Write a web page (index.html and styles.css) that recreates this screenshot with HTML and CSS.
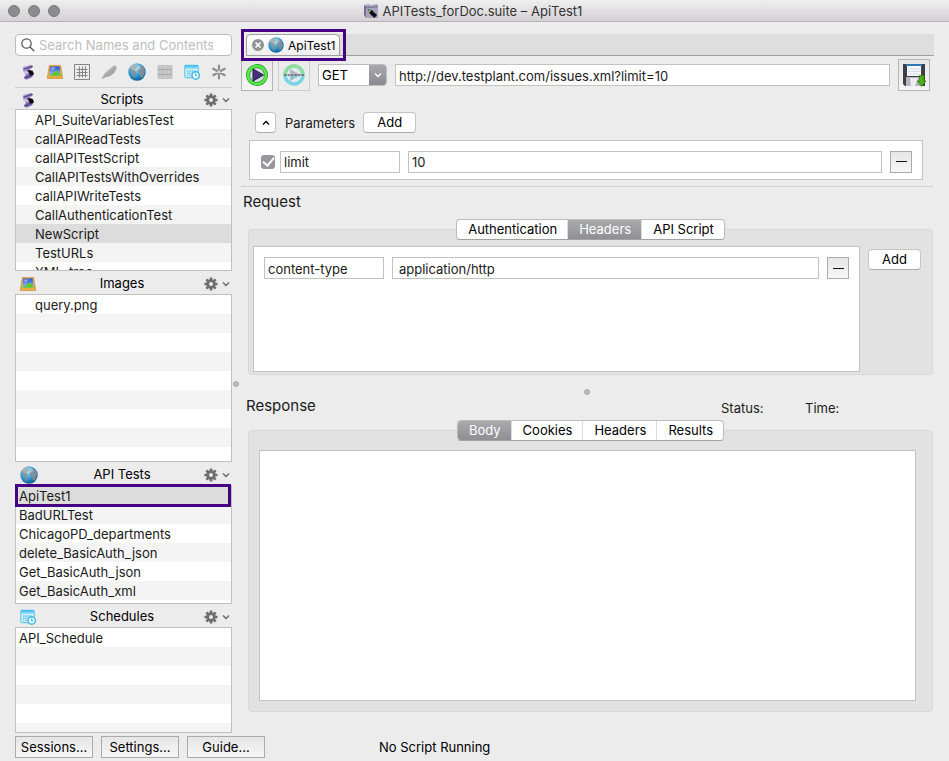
FILE: index.html
```html
<!DOCTYPE html>
<html lang="en">
<head>
<meta charset="utf-8">
<title>APITests_forDoc.suite – ApiTest1</title>
<link rel="stylesheet" href="styles.css">
</head>
<body>
<svg class="defs" aria-hidden="true">
  <defs>
    <linearGradient id="purple" x1="0" y1="0" x2="1" y2="1"><stop offset="0" stop-color="#c3b2e2"/><stop offset="1" stop-color="#5b4694"/></linearGradient>
    <radialGradient id="ocean" cx=".4" cy=".3" r=".75"><stop offset="0" stop-color="#a5e4fa"/><stop offset=".55" stop-color="#2f9bd3"/><stop offset="1" stop-color="#0c5687"/></radialGradient>
    <linearGradient id="sky" x1="0" y1="0" x2="0" y2="1"><stop offset="0" stop-color="#2350d8"/><stop offset="1" stop-color="#9ed4f6"/></linearGradient>
    <linearGradient id="blue" x1="0" y1="0" x2="0" y2="1"><stop offset="0" stop-color="#35b9ea"/><stop offset="1" stop-color="#b4e8f8"/></linearGradient>
    <linearGradient id="feather" x1="0" y1="0" x2="1" y2="1"><stop offset="0" stop-color="#cfcfcf"/><stop offset="1" stop-color="#8c8c8c"/></linearGradient>
    <symbol id="script" viewBox="0 0 16 16">
      <path d="M3 4C3 2.500 4.500 2.300 6 2.300L11 1C13 1 13.300 3 12 4L9.500 5.300l2.800 3.500c1.500 1.800.8 3.700-1 4.700L7.500 15.200c-2 .8-4-.6-3.300-2.500L6 10.700 3.800 8.500C2.700 7 3 5.500 3 4z" fill="url(#purple)"/>
      <path d="M3.500 5.200l9-2.900M4.800 14l6-3" stroke="#4d3a7c" stroke-width="1.100" fill="none"/>
      <path d="M7.500 6l5 .8 1.700 3.400-3.700 1.600z" fill="#050505"/><path d="M3 7.200l4.500.2 1.300 2-3.600.4z" fill="#d3c6ee"/>
    </symbol>
    <symbol id="image" viewBox="0 0 16 16">
      <path d="M2.300 1.500h11.400L15.800 14.500H.2z" fill="#eaaa40" stroke="#c4862a" stroke-width=".6"/>
      <path d="M3.300 2.500h9.400l1 9.300H2.300z" fill="url(#sky)"/><path d="M2.500 11.800c1.300-2 2.600-2.600 4-2 .6-2.300 2.200-3.600 3.800-2.800 1.700 1 2.800 2.800 3.400 4.800z" fill="#61c52a"/><path d="M4 3.500h5L5 6.500z" fill="#d5dcf3" opacity=".6"/>
    </symbol>
    <symbol id="table" viewBox="0 0 16 16"><path d="M.5.500h15v15H.5zM5.500 2.500v11M8.500 2.500v11M11.500 2.500v11M2.500 5.500h11M2.500 8.500h11M2.500 11.500h11" fill="none" stroke="#858585"/></symbol>
    <symbol id="quill" viewBox="0 0 16 16"><path d="M.5 14L3 11C4.500 7.500 9 5.500 11.500 2.500c1.500-1.700 4.300-1.500 4 1C15 8.500 10 12.800 4.500 13.200L1.500 15z" fill="url(#feather)"/><path d="M3 12.500L13.500 4.500" stroke="#9b9b9b" stroke-width=".6"/></symbol>
    <symbol id="globe" viewBox="0 0 18 18">
      <circle cx="9" cy="9" r="8.700" fill="url(#ocean)"/>
      <path d="M2.500 4C4 2 6.500 1.300 8.300 1.600L9.500 4 7.800 6.300 6.400 7.500l1.800 2-1 4.300-1.400 1.600-1.300-4.500-1.800-2.500L1.200 7zM11 5.300l1.800-2.800 2.700 1.800 1.400 3.200-.7 3.700-1.900 3.500-1.600-.5-.7-3.500-2-1.200-.4-2.500z" fill="#8c8f90" opacity=".85"/>
      <ellipse cx="7.500" cy="4.300" rx="5.500" ry="3" fill="#fff" opacity=".25"/>
    </symbol>
    <symbol id="server" viewBox="0 0 16 16"><rect x=".5" y="1" width="15" height="14" rx="1" fill="#c4c4c4"/><path d="M1 5.500h14M1 10.500h14" stroke="#a2a2a2"/><path d="M4 1v14M8 1v14M12 1v14" stroke="#cfcfcf" stroke-width=".6"/></symbol>
    <symbol id="calendar" viewBox="0 0 16 16"><rect x=".8" y="1.300" width="13.400" height="12.400" rx="1" fill="#d8f3fb" stroke="#43bde8"/><path d="M.8 1.300h13.400v4H.8z" fill="url(#blue)"/><path d="M3 7h9M3 9.200h6M3 11.400h5" stroke="#5cc4ea" stroke-width="1.400" stroke-dasharray="1.500 .8"/><circle cx="11.700" cy="11.500" r="3.700" fill="#f3fcff" stroke="#38b6e5" stroke-width="1.400"/><path d="M11.700 9.500v2.300h1.500" stroke="#1ba4d9" fill="none"/></symbol>
    <symbol id="star" viewBox="0 0 16 16"><path d="M8 1.500v13M2.300 4.700l11.400 6.600M13.700 4.700L2.300 11.300" stroke="#8e8e8e" stroke-width="2.200" stroke-linecap="round"/><circle cx="8" cy="8" r="1.400" fill="#e2e2e2"/></symbol>
    <symbol id="gear" viewBox="0 0 16 16"><path d="M8 .500v15M.5 8h15M2.700 2.700l10.600 10.600M13.300 2.700L2.700 13.300" stroke="#6e6e6e" stroke-width="3"/><circle cx="8" cy="8" r="3.900" fill="none" stroke="#6e6e6e" stroke-width="3.200"/><circle cx="8" cy="8" r="2.200" fill="#ececec"/></symbol>
    <symbol id="down" viewBox="0 0 8 8"><path d="M1 2.500l3 3 3-3" fill="none" stroke="currentColor" stroke-width="1.300"/></symbol>
  </defs>
</svg>
<div class="window">
  <header class="titlebar">
    <div class="lights"><i></i><i></i><i></i></div>
    <h1><svg class="i16" viewBox="0 0 16 16"><path d="M1 2l5-1 1 1.500L14 1l1 1v13L3 15z" fill="#aaa3bd"/><path d="M1 2l2 2v11L1 12z" fill="#746b91"/><path d="M3 4l12-1v1.200L3 5.300z" fill="#7d748f"/><path d="M4.500 6l4.500 1.300 5 4.700-2.500 3L7 11z" fill="#101010"/><path d="M5 6.500l3 1-1.300 2z" fill="#9add85"/></svg>APITests_forDoc.suite – ApiTest1</h1>
  </header>
  <div class="body">
    <aside class="sidebar">
      <label class="search"><svg class="i14" viewBox="0 0 14 14"><circle cx="5.500" cy="5.500" r="4.700" fill="none" stroke="#555" stroke-width="1.200"/><path d="M9 9l4.300 4.300" stroke="#555" stroke-width="1.300"/></svg><input type="search" aria-label="Search" placeholder="Search Names and Contents"></label>
      <nav class="filters">
        <button aria-label="Scripts"><svg class="i16"><use href="#script"/></svg></button>
        <button aria-label="Images"><svg class="i16"><use href="#image"/></svg></button>
        <button aria-label="Tables"><svg class="i16"><use href="#table"/></svg></button>
        <button aria-label="Helpers"><svg class="i16"><use href="#quill"/></svg></button>
        <button aria-label="API Tests"><svg class="i18"><use href="#globe"/></svg></button>
        <button aria-label="Results"><svg class="i16"><use href="#server"/></svg></button>
        <button aria-label="Schedules"><svg class="i16"><use href="#calendar"/></svg></button>
        <button aria-label="All"><svg class="i16"><use href="#star"/></svg></button>
      </nav>
      <div class="head"><svg class="i16"><use href="#script"/></svg><h2>Scripts</h2><button aria-label="Scripts actions"><svg class="i14"><use href="#gear"/></svg><svg class="i8"><use href="#down"/></svg></button></div>
      <ul class="list scripts">
        <li>API_SuiteVariablesTest</li><li>callAPIReadTests</li><li>callAPITestScript</li><li>CallAPITestsWithOverrides</li><li>callAPIWriteTests</li><li>CallAuthenticationTest</li><li class="current">NewScript</li><li>TestURLs</li><li>XML_tree</li>
      </ul>
      <div class="head"><svg class="i16"><use href="#image"/></svg><h2>Images</h2><button aria-label="Images actions"><svg class="i14"><use href="#gear"/></svg><svg class="i8"><use href="#down"/></svg></button></div>
      <ul class="list images"><li>query.png</li></ul>
      <div class="head"><svg class="i18"><use href="#globe"/></svg><h2>API Tests</h2><button aria-label="API Tests actions"><svg class="i14"><use href="#gear"/></svg><svg class="i8"><use href="#down"/></svg></button></div>
      <ul class="list tests"><li class="current marked">ApiTest1</li><li>BadURLTest</li><li>ChicagoPD_departments</li><li>delete_BasicAuth_json</li><li>Get_BasicAuth_json</li><li>Get_BasicAuth_xml</li></ul>
      <div class="head"><svg class="i16"><use href="#calendar"/></svg><h2>Schedules</h2><button aria-label="Schedules actions"><svg class="i14"><use href="#gear"/></svg><svg class="i8"><use href="#down"/></svg></button></div>
      <ul class="list schedules"><li>API_Schedule</li></ul>
    </aside>
    <div class="divider"><i class="grip"></i></div>
    <main class="main">
      <div class="tabstrip">
        <div class="tab"><button class="close" aria-label="Close tab"><svg class="i12" viewBox="0 0 12 12"><circle cx="6" cy="6" r="6" fill="#939393"/><path d="M3.500 3.500l5 5M8.500 3.500l-5 5" stroke="#fff" stroke-width="1.700"/></svg></button><svg class="i16"><use href="#globe"/></svg><span>ApiTest1</span></div>
      </div>
      <form class="toolbar">
        <button type="button" class="square" aria-label="Run"><svg class="i22" viewBox="0 0 22 22"><circle cx="11" cy="11" r="9" fill="#d9d5ea" stroke="#2a8a2c" stroke-width="3.800"/><circle cx="11" cy="11" r="9" fill="none" stroke="#4ff23e" stroke-width="2.600"/><path d="M7 5l10.500 6L7 17z" fill="#433076" stroke="#29204c"/></svg></button>
        <button type="button" class="square dim" aria-label="Run selection"><svg class="i22" viewBox="0 0 22 22"><circle cx="11" cy="11" r="9" fill="#dde8ec" stroke="#39c9dc" stroke-width="3.400"/><path d="M2 11a9 9 0 0118 0" fill="none" stroke="#5fd672" stroke-width="3.400"/><path d="M7 5l10.500 6L7 17z" fill="#9a9cb2"/><path d="M7 11h10.500L7 17z" fill="#5bb4c9"/><path d="M1 11h20" stroke="#222" stroke-width="1.400" stroke-dasharray="2.500 1"/></svg></button>
        <span class="combo"><select aria-label="Method"><option>GET</option></select><svg class="i8"><use href="#down"/></svg></span>
        <input class="field url" type="text" aria-label="URL" value="http://dev.testplant.com/issues.xml?limit=10">
        <button type="button" class="square" aria-label="Save"><svg class="i24" viewBox="0 0 24 24"><path d="M1 1h22v22H3l-2-2z" fill="#3c3f43"/><path d="M5 1h14v12H5z" fill="#f7f9fc"/><path d="M4 1h16v2H4z" fill="#2d7ab8"/><path d="M6 6h12M6 8.500h12M6 11h12" stroke="#d5dce6"/><path d="M4 14h15v9H4z" fill="#b7b8bd"/><path d="M8 15h8l-3 8H9z" fill="#ececf3"/><path d="M17.500 12.500h4.500v5.500h2L19.500 23.500 15 18h2.500z" fill="#4cae1b" stroke="#287c0d" stroke-width=".7"/></svg></button>
      </form>
      <div class="paramhead"><button class="push small" aria-label="Collapse parameters"><svg class="i8 up"><use href="#down"/></svg></button><span>Parameters</span><button class="push">Add</button></div>
      <div class="params row">
        <input type="checkbox" aria-label="Enable limit" checked>
        <input class="field name" type="text" aria-label="Parameter name" value="limit">
        <input class="field value" type="text" aria-label="Parameter value" value="10">
        <button class="minus" aria-label="Remove parameter"></button>
      </div>
      <hr>
      <h3>Request</h3>
      <section class="group request">
        <div class="segments" role="tablist"><button role="tab">Authentication</button><button role="tab" class="on" aria-selected="true">Headers</button><button role="tab">API Script</button></div>
        <div class="reqbody">
          <div class="well"><div class="row">
            <input class="field name" type="text" aria-label="Header name" value="content-type">
            <input class="field value indent" type="text" aria-label="Header value" value="application/http">
            <button class="minus" aria-label="Remove header"></button>
          </div></div>
          <button class="push">Add</button>
        </div>
      </section>
      <div class="split"><i class="grip"></i></div>
      <div class="resphead"><h3>Response</h3><span>Status:</span><span>Time:</span></div>
      <section class="group response">
        <div class="segments" role="tablist"><button role="tab" class="on" aria-selected="true">Body</button><button role="tab">Cookies</button><button role="tab">Headers</button><button role="tab">Results</button></div>
        <textarea aria-label="Response body" readonly></textarea>
      </section>
    </main>
  </div>
  <footer class="footer"><button>Sessions...</button><button>Settings...</button><button>Guide...</button><span>No Script Running</span></footer>
</div>
</body>
</html>
```
FILE: styles.css
```css
* { box-sizing: border-box; }
body { margin: 0; background: #ececec; color: #1a1a1a; font: 13px/19px Inter, "Liberation Sans", sans-serif; }
button, input, select, textarea { font: inherit; color: inherit; margin: 0; border-radius: 0; }
button { padding: 0; border: 0; background: none; }
h1, h2, h3, ul { margin: 0; padding: 0; font-weight: 400; }
svg { flex: none; display: block; }
.defs { position: absolute; width: 0; height: 0; }
.i8 { width: 8px; height: 8px; }
.i12 { width: 12px; height: 12px; }
.i14 { width: 14px; height: 14px; }
.i16 { width: 16px; height: 16px; }
.i18 { width: 18px; height: 18px; }
.i22 { width: 22px; height: 22px; }
.i24 { width: 24px; height: 24px; }

.window { display: flex; flex-direction: column; min-height: 100vh; }
.titlebar { display: flex; align-items: center; height: 22px; padding: 1px 8px 0; background: linear-gradient(#f0eff0, #d3d1d3); border-bottom: 1px solid #b6b4b6; }
.lights { display: flex; gap: 8px; width: 52px; }
.lights i { width: 12px; height: 12px; border-radius: 50%; background: #8c8b8f; border: 1px solid #79787c; }
.titlebar h1 { flex: 1; display: flex; justify-content: center; align-items: center; gap: 4px; padding-right: 56px; font-size: 13px; color: #333; }
.body { flex: 1; display: flex; padding: 12px 16px 0 15px; }

.sidebar { width: 217px; flex: none; display: flex; flex-direction: column; }
.search { display: flex; align-items: center; gap: 4px; height: 22px; padding: 0 5px; background: #fff; border: 1px solid #bcbcbc; border-radius: 4px; }
.search input { flex: 1; min-width: 0; border: 0; padding: 0; background: none; outline: 0; appearance: none; }
.search input::placeholder { color: #bdbdbd; opacity: 1; }
.filters { display: flex; justify-content: space-between; align-items: center; height: 32px; padding: 0 5px; border-bottom: 1px solid #cfcfcf; }
.head { flex: none; display: grid; grid-template-columns: 20px 1fr 28px; align-items: center; height: 23px; padding: 2px 0 0 5px; color: #000; }
.filters + .head { height: 21px; }
.head h2 { font-size: 13px; text-align: center; }
.head button { display: flex; align-items: center; gap: 4px; color: #666; }
.list { list-style: none; overflow: hidden; border: 1px solid #c0c0c0; background: repeating-linear-gradient(#fff 0 19px, #f4f4f4 19px 38px); }
.list li { height: 19px; line-height: 20px; padding-left: 3px; white-space: nowrap; }
.list .current { background: #dcdcdc; }
.scripts { flex: 162 0 162px; height: 162px; }
.images { flex: 168 0 168px; }
.scripts li, .images li { padding-left: 19px; }
.tests { flex: 119 0 119px; }
.schedules { flex: 106 0 106px; }
.tests { overflow: visible; }
.marked { position: relative; }
.marked::after { content: ""; position: absolute; inset: -2px 0 -2px -1px; border: 3px solid #450084; }

.divider { width: 9px; flex: none; display: flex; align-items: center; padding-left: 1px; }
.grip { width: 6px; height: 6px; border-radius: 50%; background: #bdbdbd; border: 1px solid #a9a9a9; }
.main { flex: 1; min-width: 0; display: flex; flex-direction: column; }
.tabstrip { display: flex; height: 22px; margin-left: 5px; margin-right: -1px; background: #dedede; border-bottom: 1px solid #a0a0a0; }
.tab { position: relative; display: flex; align-items: center; gap: 4px; width: 94px; padding-left: 5px; font-size: 12px; color: #000; background: linear-gradient(#fff, #eee); border: 1px solid #a0a0a0; border-bottom: 0; border-radius: 5px 5px 0 0; }
.tab::after { content: ""; position: absolute; inset: -6px -7px -6px -6px; border: 3px solid #450084; }
.toolbar { display: flex; align-items: center; gap: 8px; height: 38px; padding-right: 3px; }
.square { width: 32px; height: 32px; flex: none; display: grid; place-items: center; border: 1px solid #b4b4b4; background: linear-gradient(#e6e6e6, #f5f5f5); }
.square + .square { margin-left: -3px; }
.dim { border-color: #ccc; background: #ececec; }
.dim svg { opacity: .65; }
.combo { position: relative; display: flex; width: 69px; height: 22px; flex: none; color: #fff; }
.combo select { width: 100%; appearance: none; border: 1px solid #bcbcbc; border-radius: 0 4px 4px 0; padding: 1px 3px 0; color: #000; background: linear-gradient(#a9a8ad, #8b8a90) right / 17px 100% no-repeat #fff; }
.combo svg { position: absolute; right: 5px; top: 7px; }
.field { height: 22px; min-width: 0; padding: 1px 3px 0; border: 1px solid #c2c2c2; background: #fff; outline: 0; }
.url { flex: 1; }
.push { height: 21px; width: 53px; border: 1px solid #c4c4c4; border-bottom-color: #aaa; border-radius: 4px; background: #fff; color: #000; line-height: 19px; }
.small { width: 21px; display: grid; place-items: center; }
.up { transform: rotate(180deg); }
.paramhead { display: flex; align-items: center; gap: 8px; height: 21px; margin: 18px 0 7px 14px; }
.paramhead span { padding: 2px 0 0 1px; }
.row { display: flex; align-items: center; gap: 8px; }
.params { height: 40px; margin: 0 10px 0 8px; padding: 3px 10px 0 11px; background: #fff; border: 1px solid #c2c2c2; }
.params input[type="checkbox"] { appearance: none; width: 14px; height: 14px; border-radius: 3px; margin-right: -3px; background: #98969b; display: grid; place-items: center; }
.params input[type="checkbox"]::after { content: ""; width: 5px; height: 9px; margin-bottom: 2px; border: solid #fff; border-width: 0 2px 2px 0; transform: rotate(40deg); }
.name { width: 120px; }
.value { flex: 1; }
.indent { padding-left: 6px; }
.minus { width: 22px; height: 22px; display: grid; place-items: center; border: 1px solid #aaa; background: linear-gradient(#e6e6e6, #f7f7f7); }
.minus::before { content: ""; width: 11px; height: 1px; background: #111; }
hr { width: 100%; margin: 6px 0; border: 0; border-top: 1px solid #cfcfcf; }
h3 { font-size: 15px; line-height: 18px; padding-left: 2px; }
.group { display: flex; flex-direction: column; margin-left: 7px; border: 1px solid #d8d8d8; border-radius: 4px; background: #e2e2e2; }
.request { margin-top: 18px; }
.segments { align-self: center; display: flex; height: 21px; margin: -11px 0 6px; border: 1px solid #bcbcbc; border-bottom-color: #a2a2a2; border-radius: 4px; background: #fff; overflow: hidden; }
.segments button { padding: 0 10px 0 11px; color: #000; line-height: 19px; }
.segments button + button { border-left: 1px solid #ddd; }
.segments .on { color: #fff; background: linear-gradient(#aaa9ae, #8f8e93); }
.reqbody { display: flex; align-items: flex-start; gap: 8px; padding: 0 11px 2px 4px; }
.reqbody > .push { margin-top: 3px; }
.well { flex: 1; min-height: 126px; padding: 10px; background: #fff; border: 1px solid #c2c2c2; }
.split { display: flex; justify-content: center; padding: 14px 0 2px; }
.resphead { display: flex; align-items: flex-start; padding-left: 3px; height: 33px; }
.resphead h3 { flex: 1; }
.resphead span { width: 84px; padding-top: 2px; line-height: 19px; }
.resphead span:last-child { width: 128px; }
.response { flex: 1; margin-bottom: 21px; }
.response .segments { margin-bottom: 9px; }
.response textarea { flex: 1; margin: 0 16px 10px 10px; min-height: 100px; resize: none; border: 1px solid #c2c2c2; background: #fff; outline: 0; }
.footer { display: flex; gap: 8px; align-items: center; height: 28px; padding: 0 15px; color: #000; }
.footer button { width: 78px; height: 22px; border: 1px solid #ababab; background: linear-gradient(#e6e6e6, #f6f6f6); }
.footer span { margin-left: 106px; }
```
